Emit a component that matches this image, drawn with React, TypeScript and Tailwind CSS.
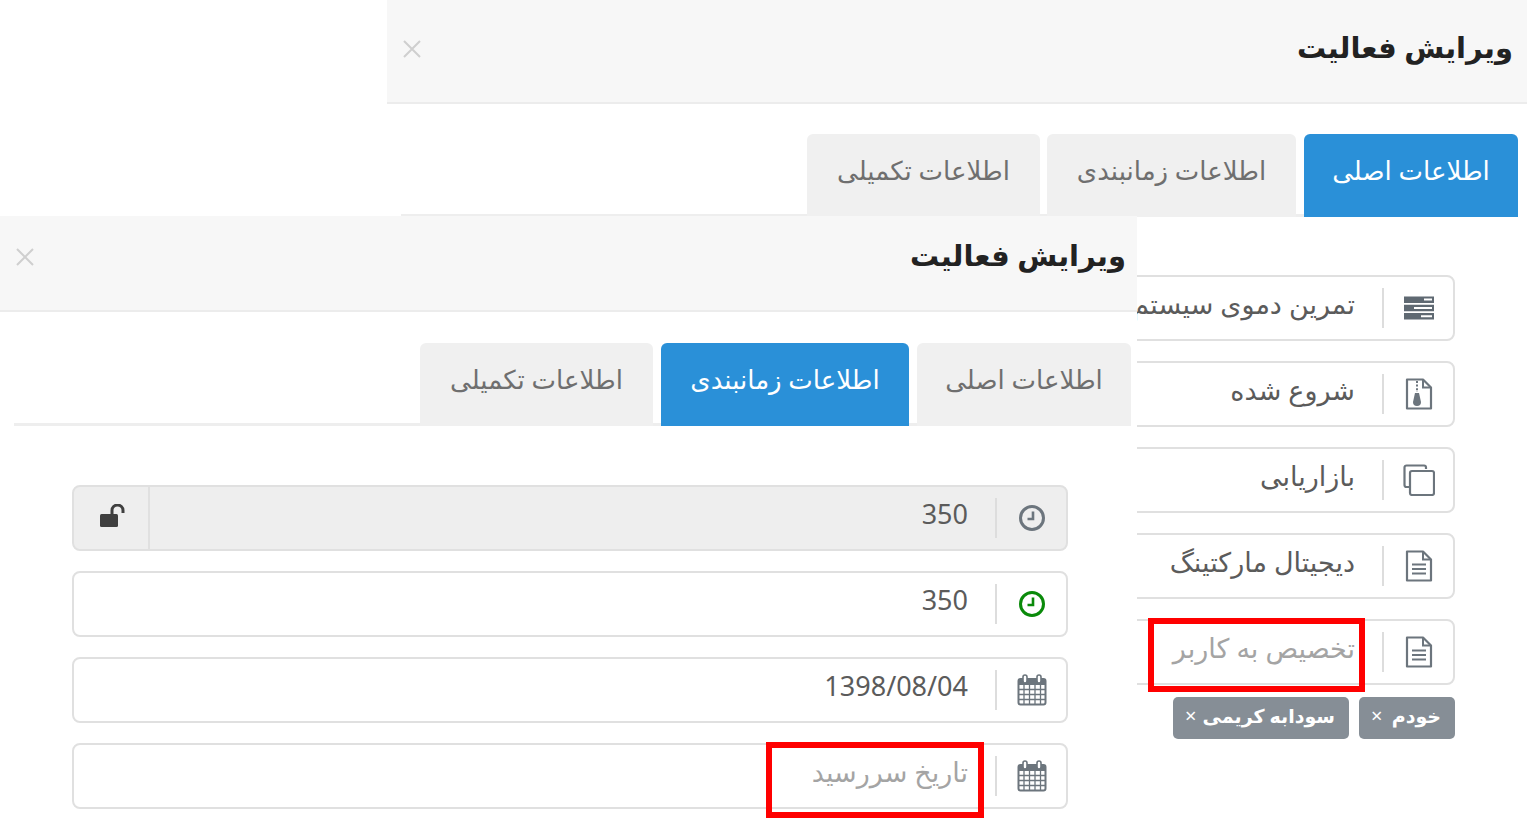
import type { ReactNode } from "react";

const gray = "#6c757d";

function ServerIcon() {
  return (
    <svg width="32" height="26" viewBox="0 0 32 26">
      <path fill="#5f6972" fillRule="evenodd" d="M1 1.500h30v6.500H1zM21 3.500v2h8v-2zM1 9.800h30v6.500H1zM11 12v2h18v-2zM1 18h30v6.500H1zM18 20.200v2h11v-2z" />
    </svg>
  );
}

function ZipIcon() {
  return (
    <svg width="28" height="32" viewBox="0 0 28 32" fill="none" stroke={gray}>
      <path strokeWidth="2.200" strokeLinejoin="round" d="M2 1.500h16l8 8v21H2z" />
      <path strokeWidth="2" d="M18 1.500v8h8" />
      <path strokeWidth="2" strokeDasharray="2 1.600" d="M12 3v11" />
      <path fill={gray} stroke="none" d="M10 15h4l2 9a4 4 0 1 1-8 0z" />
    </svg>
  );
}

function CopyIcon() {
  return (
    <svg width="32" height="32" viewBox="0 0 32 32" fill="none" stroke={gray} strokeWidth="2.200">
      <path d="M23 5V3.500a2 2 0 0 0-2-2H3.500a2 2 0 0 0-2 2V21a2 2 0 0 0 2 2H7" />
      <rect x="7" y="7" width="24" height="24" rx="2" />
    </svg>
  );
}

function FileIcon() {
  return (
    <svg width="28" height="32" viewBox="0 0 28 32" fill="none" stroke={gray}>
      <path strokeWidth="2.200" strokeLinejoin="round" d="M2 1.500h16l8 8v21H2z" />
      <path strokeWidth="2" d="M18 1.500v8h8M7 14.500h14M7 19h14M7 23.500h14" />
    </svg>
  );
}

function ClockIcon({ color }: { color: string }) {
  return (
    <svg width="28" height="28" viewBox="0 0 28 28" fill="none" stroke={color}>
      <circle cx="14" cy="14" r="11.500" strokeWidth="3" />
      <path strokeWidth="2.600" d="M15 7.500V15H9.500" />
    </svg>
  );
}

function CalendarIcon() {
  return (
    <svg width="30" height="32" viewBox="0 0 30 32" fill="none" stroke={gray}>
      <rect x="1.500" y="5" width="27" height="25.500" rx="2" fill="#ffffff" strokeWidth="2" />
      <path fill={gray} stroke="none" d="M1.500 5h27v6h-27z" />
      <path strokeWidth="1.300" d="M2 15.500h26M2 20.500h26M2 25.500h26M7 11v19M12.500 11v19M18 11v19M23.500 11v19" />
      <rect x="6" y="1" width="4" height="8" rx="2" fill="#ffffff" strokeWidth="1.600" />
      <rect x="20" y="1" width="4" height="8" rx="2" fill="#ffffff" strokeWidth="1.600" />
    </svg>
  );
}

function UnlockIcon() {
  return (
    <svg width="28" height="24" viewBox="0 0 28 24" fill="none">
      <rect x="1" y="10" width="18" height="13" rx="1.500" fill="#3f3f3f" />
      <path stroke="#3f3f3f" strokeWidth="3" d="M13 10V6.500a5.500 5.500 0 0 1 11 0V9" />
    </svg>
  );
}

function Field({
  icon,
  text,
  placeholder,
  addon,
  disabled,
}: {
  icon: ReactNode;
  text: string;
  placeholder?: boolean;
  addon?: boolean;
  disabled?: boolean;
}) {
  return (
    <div
      className={`flex h-[66px] items-center rounded-lg border-2 border-[#e0e0e0] ${disabled ? "bg-[#eeeeee]" : "bg-white"}`}
    >
      <div className="flex w-[69px] shrink-0 justify-center">{icon}</div>
      <div className="h-10 w-[2px] shrink-0 bg-[#dddddd]" />
      <div
        className={`min-w-0 flex-1 overflow-hidden whitespace-nowrap pr-[27px] pb-[7px] text-[27px] ${placeholder ? "text-[#a4a4a4]" : "text-[#5b5b5b]"}`}
      >
        {text}
      </div>
      {addon && (
        <div className="flex h-full w-[76px] shrink-0 items-center justify-center rounded-l-lg border-r-2 border-[#e0e0e0] bg-[#eeeeee] pb-1">
          <div className="-mr-[3px]">
            <UnlockIcon />
          </div>
        </div>
      )}
    </div>
  );
}

function Tab({ label, width, active }: { label: string; width: string; active?: boolean }) {
  return (
    <div
      className={`flex h-[83px] items-center justify-center rounded-t-md pb-[10px] text-[26px] ${width} ${active ? "bg-[#2a90d8] text-white" : "bg-[#f0f0f0] text-[#6f6f6f]"}`}
    >
      {label}
    </div>
  );
}

function Tag({ label, width }: { label: string; width: string }) {
  return (
    <div
      className={`flex h-[42px] items-center justify-between whitespace-nowrap rounded-[5px] bg-[#868e96] pr-[14px] pl-3 pb-1 text-[19px] font-bold text-white ${width}`}
    >
      <span>{label}</span>
      <span className="text-[20px] font-normal">×</span>
    </div>
  );
}

function Header({ height, inset }: { height: string; inset: string }) {
  return (
    <div
      className={`flex items-center justify-between border-b-2 border-[#ececec] bg-[#f7f7f7] pl-[16px] ${height} ${inset}`}
    >
      <h2 className="pb-1 text-[29px] font-bold text-[#222222]">ویرایش فعالیت</h2>
      <svg width="18" height="18" viewBox="0 0 18 18" stroke="#cfcfcf" strokeWidth="2">
        <path d="M1 1l16 16M17 1L1 17" />
      </svg>
    </div>
  );
}

export default function App() {
  return (
    <div
      dir="rtl"
      className="relative h-[835px] w-full overflow-hidden bg-white font-['Noto_Sans','DejaVu_Sans',sans-serif]"
    >
      {/* back window */}
      <div className="absolute top-0 right-0 h-[835px] w-[1140px] bg-white">
        <Header height="h-[104px]" inset="pr-[14px] pb-[5px]" />
        <div className="mt-[30px] mr-[9px] ml-[14px] flex h-[83px] items-start gap-2 border-b-[3px] border-[#eeeeee]">
          <Tab label="اطلاعات اصلی" width="w-[214px]" active />
          <Tab label="اطلاعات زمانبندی" width="w-[249px]" />
          <Tab label="اطلاعات تکمیلی" width="w-[233px] -mr-px" />
        </div>
        <div className="mt-[58px] mr-[72px] flex w-[995px] flex-col gap-5">
          <Field icon={<ServerIcon />} text="تمرین دموی سیستم" />
          <Field icon={<ZipIcon />} text="شروع شده" />
          <Field icon={<CopyIcon />} text="بازاریابی" />
          <Field icon={<FileIcon />} text="دیجیتال مارکتینگ" />
          <Field icon={<FileIcon />} text="تخصیص به کاربر" placeholder />
        </div>
        <div className="mt-[12px] mr-[72px] flex gap-[10px]">
          <Tag label="خودم" width="w-[96px]" />
          <Tag label="سودابه کریمی" width="w-[176px]" />
        </div>
      </div>

      {/* front window */}
      <div className="absolute top-[216px] left-0 h-[619px] w-[1137px] bg-white">
        <Header height="h-[96px]" inset="pr-[11px] pb-[12px]" />
        <div className="mt-[31px] mr-[6px] ml-[14px] flex h-[83px] items-start gap-2 border-b-[3px] border-[#eeeeee]">
          <Tab label="اطلاعات اصلی" width="w-[214px]" />
          <Tab label="اطلاعات زمانبندی" width="w-[248px]" active />
          <Tab label="اطلاعات تکمیلی" width="w-[233px]" />
        </div>
        <div className="mt-[59px] mr-[69px] flex w-[996px] flex-col gap-5">
          <Field icon={<ClockIcon color={gray} />} text="350" addon disabled />
          <Field icon={<ClockIcon color="#0a8a0a" />} text="350" />
          <Field icon={<CalendarIcon />} text="1398/08/04" />
          <Field icon={<CalendarIcon />} text="تاریخ سررسید" placeholder />
        </div>
      </div>

      {/* red annotations */}
      <div className="absolute top-[618px] left-[1148px] h-[74px] w-[217px] border-[6px] border-[#ff0000]" />
      <div className="absolute top-[742px] left-[766px] h-[76px] w-[218px] border-[6px] border-[#ff0000]" />
    </div>
  );
}
